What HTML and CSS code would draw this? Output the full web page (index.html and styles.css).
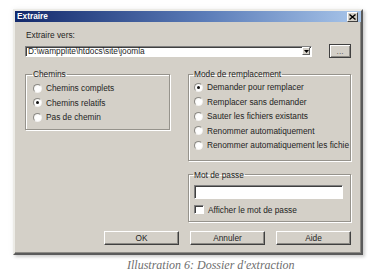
FILE: index.html
```html
<!DOCTYPE html>
<html lang="fr">
<head>
  <meta charset="UTF-8">
  <title>Extraire</title>
  <link rel="stylesheet" href="styles.css">
</head>
<body>
  <!-- fenetre -->
  <div class="window">
    <div class="titlebar">
      <span class="title">Extraire</span>
      <span class="close">
        <svg width="7" height="6" viewBox="0 0 7 6"><path d="M0.5 0.5 L6.5 5.5 M6.5 0.5 L0.5 5.5" stroke="#000" stroke-width="1.4"/></svg>
      </span>
    </div>

    <div class="body">
      <div class="field-label">Extraire vers:</div>
      <div class="path-row">
        <div class="combo">
          <span class="combo-text">D:\wampplite\htdocs\site\joomla</span>
          <span class="combo-btn">
            <svg width="5" height="3" viewBox="0 0 5 3"><path d="M0 0 H5 L2.5 3 Z" fill="#000"/></svg>
          </span>
        </div>
        <button class="btn btn-browse">...</button>
      </div>

      <div class="groups">
        <!-- chemins -->
        <fieldset class="group group-paths">
          <legend>Chemins</legend>
          <div class="option"><span class="radio"></span><span class="option-text">Chemins complets</span></div>
          <div class="option"><span class="radio checked"></span><span class="option-text">Chemins relatifs</span></div>
          <div class="option"><span class="radio"></span><span class="option-text">Pas de chemin</span></div>
        </fieldset>

        <div class="right-col">
          <fieldset class="group group-mode">
            <legend>Mode de remplacement</legend>
            <div class="option"><span class="radio checked"></span><span class="option-text">Demander pour remplacer</span></div>
            <div class="option"><span class="radio"></span><span class="option-text">Remplacer sans demander</span></div>
            <div class="option"><span class="radio"></span><span class="option-text">Sauter les fichiers existants</span></div>
            <div class="option"><span class="radio"></span><span class="option-text">Renommer automatiquement</span></div>
            <div class="option"><span class="radio"></span><span class="option-text">Renommer automatiquement les fichie</span></div>
          </fieldset>

          <fieldset class="group group-pass">
            <legend>Mot de passe</legend>
            <div class="pass-input"></div>
            <div class="check-row"><span class="checkbox"></span><span class="option-text">Afficher le mot de passe</span></div>
          </fieldset>
        </div>
      </div>

      <div class="actions">
        <button class="btn">OK</button>
        <button class="btn">Annuler</button>
        <button class="btn">Aide</button>
      </div>
    </div>
  </div>

  <p class="caption">Illustration 6: Dossier d'extraction</p>
</body>
</html>
```

FILE: styles.css
```css
body { margin: 0; background: #fff; font-family: 'Liberation Sans', Arial, sans-serif; font-size: 8.3px; color: #1e1e1e; }

.window { box-sizing: border-box; width: 350px; height: 246px; margin: 9px 0 0 13px; background: #d4d0c8; border: 2px solid; border-color: #ecebe6 #5a5a5a #5a5a5a #ecebe6; box-shadow: inset -1px -1px 0 #8c8a85, 2px 2px 3px rgba(0,0,0,0.18), 0 0 6px rgba(0,0,0,0.06); display: flex; flex-direction: column; }

.titlebar { height: 11px; display: flex; align-items: center; justify-content: space-between; padding: 0 3px 0 2px; background: linear-gradient(to right, #13296b, #5b7cb8 55%, #a9c6ea); }
.title { color: #fff; font-weight: bold; font-size: 8.3px; line-height: 11px; }
.close { box-sizing: border-box; width: 11px; height: 10px; display: flex; align-items: center; justify-content: center; background: #d4d0c8; border: 1px solid; border-color: #fff #404040 #404040 #fff; }

.body { flex: 1; display: flex; flex-direction: column; padding: 8px 10px 8px 10px; }

.field-label { line-height: 10px; padding-left: 1px; }

.path-row { display: flex; align-items: center; margin-top: 4px; height: 14px; }
.combo { box-sizing: border-box; width: 289px; height: 11px; display: flex; align-items: center; justify-content: space-between; background: #fff; border: 1px solid; border-color: #808080 #fff #fff #808080; box-shadow: inset 1px 1px 0 #404040; padding-left: 2px; }
.combo-text { line-height: 9px; }
.combo-btn { box-sizing: border-box; width: 8px; height: 8px; margin-right: 1px; display: flex; align-items: center; justify-content: center; background: #d4d0c8; border: 1px solid; border-color: #fff #606060 #606060 #fff; }

.btn { box-sizing: border-box; height: 14px; padding: 0; font-family: inherit; font-size: 8.3px; color: #1e1e1e; background: #d4d0c8; border: 1px solid; border-color: #fff #404040 #404040 #fff; box-shadow: inset -1px -1px 0 #8c8a85; line-height: 12px; }
.btn-browse { width: 22px; margin-left: 17px; border-color: #404040; box-shadow: inset 1px 1px 0 #fff, inset -1px -1px 0 #8c8a85; color: #666; }

.groups { display: flex; gap: 18px; margin-top: 11px; align-items: flex-start; }
.right-col { display: flex; flex-direction: column; gap: 9px; }

.group { margin: 0; border: 1px solid #96938c; box-shadow: 1px 1px 0 #fff, inset 1px 1px 0 #fff; min-width: 0; }
.group legend { padding: 0 1px; margin-left: -1px; line-height: 10px; }

.group-paths { width: 146px; box-sizing: border-box; padding: 2px 0 4px 7px; }
.group-mode { width: 163px; box-sizing: border-box; padding: 1px 0 7px 5px; }
.group-pass { width: 163px; box-sizing: border-box; padding: 5px 7px 6px 5px; }

.option { height: 14.5px; display: flex; align-items: center; white-space: nowrap; }
.option-text { margin-left: 4px; line-height: 10px; }

.radio { box-sizing: border-box; flex: none; width: 9px; height: 9px; border-radius: 50%; background: radial-gradient(circle at 60% 60%, #fff 45%, #e6e4df); border: 1px solid; border-color: #8c8a85 #f4f3f0 #f4f3f0 #8c8a85; position: relative; }
.radio.checked::after { content: ''; position: absolute; top: 2px; left: 2px; width: 3px; height: 3px; border-radius: 50%; background: #111; }

.pass-input { box-sizing: border-box; height: 14px; width: 149px; background: #fff; border: 1px solid; border-color: #808080 #fff #fff #808080; box-shadow: inset 1px 1px 0 #404040; }
.check-row { display: flex; align-items: center; margin-top: 6px; height: 10px; }
.checkbox { box-sizing: border-box; flex: none; width: 10px; height: 9px; background: #fff; border: 1px solid; border-color: #808080 #fff #fff #808080; box-shadow: inset 1px 1px 0 #404040; }

.actions { margin-top: auto; display: flex; justify-content: flex-end; gap: 11px; }
.actions .btn { width: 75px; }

.caption { margin: 3px 0 0 127px; font-family: 'Liberation Serif', 'Times New Roman', serif; font-style: italic; font-size: 12px; color: #6e6e6e; line-height: 14px; }
```
